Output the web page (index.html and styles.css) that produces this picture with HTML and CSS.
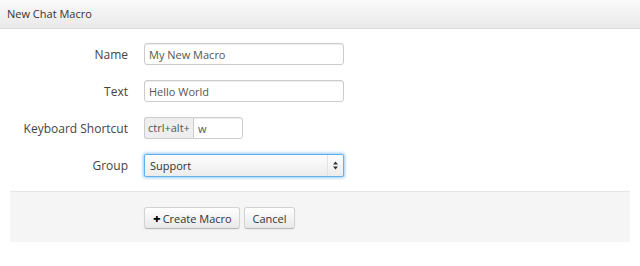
FILE: index.html
```html
<!DOCTYPE html>
<html lang="en">
  <head>
    <meta charset="UTF-8" />
    <meta name="viewport" content="width=device-width, initial-scale=1.0" />
    <title>New Chat Macro</title>
    <link rel="stylesheet" href="styles.css">
  </head>
  <body>
    <div class="modal-header">New Chat Macro</div>
    <form class="macro-form">
      <div class="row">
        <label class="label">Name</label>
        <input class="field" type="text" value="My New Macro" />
      </div>
      <div class="row">
        <label class="label">Text</label>
        <input class="field" type="text" value="Hello World" />
      </div>
      <div class="row">
        <label class="label">Keyboard Shortcut</label>
        <div class="prepend">
          <span class="addon">ctrl+alt+</span>
          <input class="field short" type="text" value="w" />
        </div>
      </div>
      <div class="row">
        <label class="label">Group</label>
        <div class="select-wrap">
          <select class="field select">
            <option>Support</option>
            <option>Sales</option>
          </select>
          <span class="arrows">
            <svg width="5" height="9" viewBox="0 0 5 9">
              <path d="M2.5 0.5 L5 3.5 L0 3.5 Z" fill="#333" />
              <path d="M2.5 8.5 L5 5.5 L0 5.5 Z" fill="#333" />
            </svg>
          </span>
        </div>
      </div>
      <div class="form-actions">
        <button class="btn create" type="button"><span class="plus">+</span>Create Macro</button>
        <button class="btn cancel" type="button">Cancel</button>
      </div>
    </form>
  </body>
</html>
```

FILE: styles.css
```css
* {
  margin: 0;
  padding: 0;
  box-sizing: border-box;
}
body {
  background: #fff;
  font-family: "Open Sans", "Liberation Sans", sans-serif;
  font-size: 12px;
  color: #333;
}
.modal-header {
  height: 29px;
  padding: 6px 7px 0;
  line-height: 16px;
  font-size: 11px;
  color: #333;
  background: linear-gradient(#fafafa, #e9e9e9);
  border-bottom: 1px solid #dcdcdc;
}
.macro-form {
  padding: 14px 10px 0;
}
.row {
  display: flex;
  align-items: center;
  height: 22px;
  margin-bottom: 15px;
}
.label {
  width: 118px;
  margin-right: 16px;
  text-align: right;
  color: #444;
}
.field {
  width: 200px;
  height: 22px;
  padding: 0 4px;
  font-family: inherit;
  font-size: 11px;
  color: #555;
  background: #fff;
  border: 1px solid #ccc;
  border-radius: 3px;
  box-shadow: inset 0 1px 1px rgba(0, 0, 0, 0.075);
  outline: none;
}
.prepend {
  display: flex;
}
.addon {
  height: 22px;
  width: 49px;
  padding: 0 3px;
  line-height: 20px;
  font-size: 11px;
  color: #555;
  background: #eee;
  border: 1px solid #ccc;
  border-right: none;
  border-radius: 3px 0 0 3px;
  white-space: nowrap;
}
.field.short {
  width: 50px;
  border-radius: 0 3px 3px 0;
}
.select-wrap {
  position: relative;
  height: 23px;
}
.select {
  appearance: none;
  -webkit-appearance: none;
  height: 23px;
  padding: 0 5px;
  color: #333;
  background: linear-gradient(#fdfdfd, #ececec);
  border: 1px solid rgba(82, 168, 236, 0.9);
  border-radius: 2px;
  box-shadow: 0 0 3px 1px rgba(82, 168, 236, 0.6);
}
.arrows {
  position: absolute;
  top: 1px;
  right: 1px;
  width: 16px;
  height: 21px;
  display: flex;
  align-items: center;
  justify-content: center;
  border-left: 1px solid #e2e2e2;
}
.form-actions {
  display: flex;
  gap: 4px;
  height: 51px;
  padding: 15px 0 0 134px;
  background: #f5f5f5;
  border-top: 1px solid #e5e5e5;
}
.btn {
  height: 22px;
  padding: 0 8px;
  font-family: inherit;
  font-size: 11px;
  color: #333;
  background: linear-gradient(#fff, #e8e8e8);
  border: 1px solid #d2d2d2;
  border-bottom-color: #b8b8b8;
  border-radius: 3px;
  box-shadow: inset 0 1px 0 rgba(255, 255, 255, 0.2), 0 1px 2px rgba(0, 0, 0, 0.05);
  cursor: pointer;
}
.btn.create {
  width: 96px;
  padding: 0 0 0 8px;
  text-align: left;
}
.btn.cancel {
  width: 51px;
  padding: 0;
}
.plus {
  font-weight: 900;
  font-size: 13px;
  color: #000;
  margin-right: 2px;
}
```
